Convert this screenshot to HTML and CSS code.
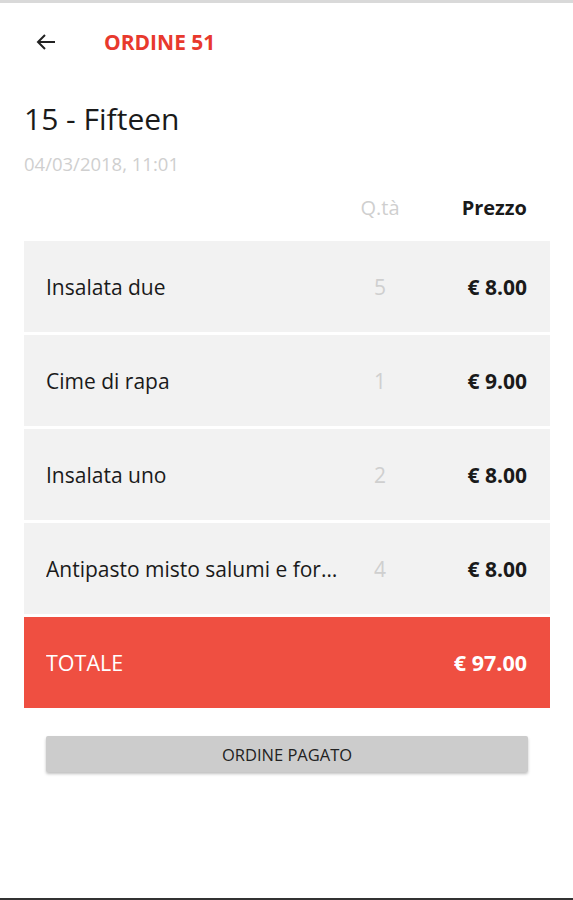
FILE: index.html
```html
<!DOCTYPE html>
<html>
<head>
  <meta charset="UTF-8">
  <meta name="viewport" content="width=device-width, initial-scale=1">
  <title>Ordine 51</title>
  <link rel="stylesheet" href="styles.css">
</head>
<body>
  <div class="screen">
    <!-- Top bar -->
    <div class="topbar">
      <span class="back">
        <svg width="24" height="24" viewBox="0 0 24 24"><path d="M21 12H4M11 5l-7 7 7 7" fill="none" stroke="#222" stroke-width="2"/></svg>
      </span>
      <span class="title">ORDINE 51</span>
    </div>

    <div class="order">
      <h1 class="table-name">15 - Fifteen</h1>
      <div class="date">04/03/2018, 11:01</div>

      <div class="list-head">
        <span class="name"></span>
        <span class="qty">Q.tà</span>
        <span class="price">Prezzo</span>
      </div>

      <div class="items">
        <div class="item">
          <span class="name">Insalata due</span>
          <span class="qty">5</span>
          <span class="price">€ 8.00</span>
        </div>
        <div class="item">
          <span class="name">Cime di rapa</span>
          <span class="qty">1</span>
          <span class="price">€ 9.00</span>
        </div>
        <div class="item">
          <span class="name">Insalata uno</span>
          <span class="qty">2</span>
          <span class="price">€ 8.00</span>
        </div>
        <div class="item">
          <span class="name" title="Antipasto misto salumi e formaggi">Antipasto misto salumi e formaggi</span>
          <span class="qty">4</span>
          <span class="price">€ 8.00</span>
        </div>
        <div class="item total">
          <span class="name">TOTALE</span>
          <span class="price">€ 97.00</span>
        </div>
      </div>

      <button class="paid">ORDINE PAGATO</button>
    </div>
  </div>
</body>
</html>
```

FILE: styles.css
```css
/* Global styles */
html, body {
  margin: 0;
  padding: 0;
  background-color: #ffffff;
  font-family: 'Open Sans', sans-serif;
  color: #1a1a1a;
}
.screen {
  height: 900px;
  box-sizing: border-box;
  border-top: 3px solid #d9d9d9;
  border-bottom: 2px solid #333333;
}
/* Header */
.topbar {
  display: flex;
  align-items: center;
  height: 78px;
  padding-left: 34px;
}
.back {
  display: flex;
  width: 24px;
  margin-right: 46px;
}
.title {
  color: #e8392d;
  font-size: 21px;
  font-weight: 700;
}
.order {
  padding: 0 23px 0 24px;
}
.table-name {
  margin: 18px 0 0;
  font-size: 30px;
  font-weight: 400;
  line-height: 40px;
}
.date {
  color: #cfcfcf;
  font-size: 18.5px;
  line-height: 24px;
  margin-top: 13px;
}
/* Item rows */
.list-head,
.item {
  display: flex;
  align-items: center;
  padding: 0 23px 0 22px;
}
.list-head {
  height: 40px;
  margin-top: 11px;
  font-size: 20px;
}
.name {
  flex: 1;
  min-width: 0;
  white-space: nowrap;
  overflow: hidden;
  text-overflow: ellipsis;
  padding-right: 8px;
}
.qty {
  width: 48px;
  text-align: center;
  color: #cfcfcf;
  margin-right: 0;
}
.price {
  width: 123px;
  text-align: right;
  font-weight: 700;
}
.items {
  display: flex;
  flex-direction: column;
  gap: 3px;
  margin-top: 14px;
}
.item {
  height: 91px;
  background-color: #f2f2f2;
  font-size: 21px;
}
.item.total {
  background-color: #ef4f41;
  color: #ffffff;
  font-size: 21.5px;
}
.paid {
  display: block;
  width: calc(100% - 44px);
  margin: 28px auto 0;
  height: 36px;
  background: #cccccc;
  border: none;
  border-radius: 2px;
  box-shadow: 0 2px 3px rgba(0, 0, 0, 0.25);
  font-family: 'Open Sans', sans-serif;
  font-size: 16.5px;
  color: #222222;
}
```
